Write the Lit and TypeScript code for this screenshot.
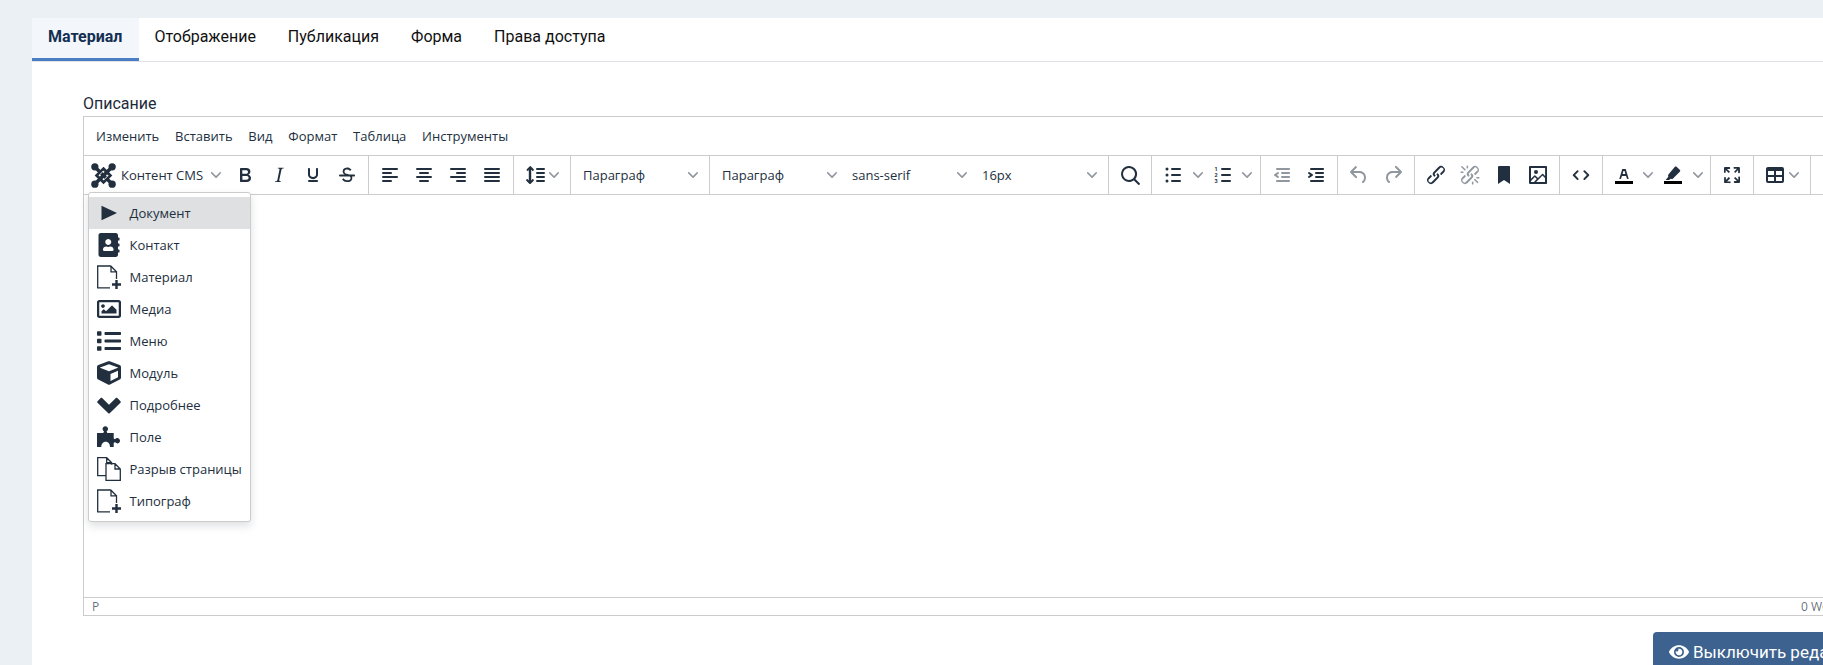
import { LitElement, html, css, svg } from "lit";
import { customElement } from "lit/decorators.js";

const bar = (x: number, y: number, w: number, h = 2) =>
  svg`<rect x=${x} y=${y} width=${w} height=${h} rx="1"></rect>`;
const dot = (x: number, y: number, r = 1.5) => svg`<circle cx=${x} cy=${y} r=${r}></circle>`;
const p = (d: string) => svg`<path d=${d}></path>`;

const icons: Record<string, unknown> = {
  bold: p("M7.8 19c-.3 0-.5 0-.6-.2l-.2-.5V5.7c0-.2 0-.4.2-.5l.6-.2h5c1.5 0 2.7.3 3.5 1 .7.6 1.1 1.4 1.1 2.5a3 3 0 0 1-.6 1.9c-.4.6-1 1-1.6 1.2.4.1.9.3 1.3.6s.8.7 1 1.2c.4.4.5 1 .5 1.6 0 1.3-.4 2.3-1.3 3-.8.7-2.1 1-3.8 1H7.8zm5-8.3c.6 0 1.2-.1 1.6-.5.4-.3.6-.7.6-1.3 0-1.1-.8-1.7-2.3-1.7H9.3v3.5h3.4zm.5 6c.7 0 1.3-.1 1.7-.4.4-.4.6-.9.6-1.5s-.2-1-.7-1.4c-.4-.3-1-.4-2-.4H9.4v3.8h4z"),
  italic: p("M16.7 4.7l-.1.9h-.3c-.6 0-1 0-1.4.3-.3.3-.4.6-.5 1.1l-2.1 9.8v.6c0 .5.4.8 1.4.8h.2l-.2.8H8l.2-.8h.2c1.1 0 1.8-.5 2-1.5l2-9.8.1-.5c0-.6-.4-.8-1.4-.8h-.3l.2-.9h5.8z"),
  underline: p("M16 5c.6 0 1 .4 1 1v5.5a4 4 0 0 1-.4 1.8l-1 1.4a5.3 5.3 0 0 1-5.5 1 5 5 0 0 1-1.6-1c-.5-.4-.8-.9-1.1-1.4a4 4 0 0 1-.4-1.8V6c0-.6.4-1 1-1s1 .4 1 1v5.5c0 .3 0 .6.2 1l.6.7a3.3 3.3 0 0 0 2.2.8 3.4 3.4 0 0 0 2.2-.8c.3-.2.4-.5.6-.8l.2-.9V6c0-.6.4-1 1-1zM8 17h8c.6 0 1 .4 1 1s-.4 1-1 1H8a1 1 0 0 1 0-2z"),
  strike: p("M15.6 8.5c-.5-.7-1-1.1-1.3-1.3-.6-.4-1.3-.6-2-.6-2.7 0-2.8 1.7-2.8 2.1 0 1.6 1.8 2 3.2 2.3 4.4.9 4.6 2.8 4.6 3.9 0 1.4-.7 4.1-5 4.1A6.2 6.2 0 0 1 7 16.4l1.5-1.1c.4.6 1.6 2 3.7 2 1.6 0 2.5-.4 3-1 .3-.4.4-.8.4-1.3 0-1.6-1.6-2.4-3.4-2.8-1-.2-2.2-.5-3-1-.7-.5-1.5-1.2-1.5-2.7 0-1.4.6-2.5 1.8-3.2.8-.5 1.8-.8 2.8-.8 1.6 0 2.7.7 3.5 1.4l.7.8-1.4 1.1zM5 11.5h14c.6 0 1 .4 1 1s-.4 1-1 1H5a1 1 0 0 1 0-2z"),
  alignLeft: [bar(4, 5, 16), bar(4, 9, 10), bar(4, 13, 16), bar(4, 17, 10)],
  alignCenter: [bar(4, 5, 16), bar(7, 9, 10), bar(4, 13, 16), bar(7, 17, 10)],
  alignRight: [bar(4, 5, 16), bar(10, 9, 10), bar(4, 13, 16), bar(10, 17, 10)],
  justify: [bar(4, 5, 16), bar(4, 9, 16), bar(4, 13, 16), bar(4, 17, 16)],
  lineHeight: [
    bar(13, 5, 9), bar(13, 9, 9), bar(13, 13, 9), bar(13, 17, 9),
    p("M7.7 3.3l3 3a1 1 0 0 1-1.4 1.4L8.2 6.6v10.8l1.1-1.1a1 1 0 0 1 1.4 1.4l-3 3a1 1 0 0 1-1.4 0l-3-3a1 1 0 0 1 1.4-1.4l1.1 1.1V6.6L5.2 7.7a1 1 0 0 1-1.4-1.4l3-3a.7.7 0 0 1 .9 0z"),
  ],
  search: p("M16 17.3a8 8 0 1 1 1.4-1.4l4.3 4.4a1 1 0 0 1-1.4 1.4l-4.4-4.3zm-5-.3a6 6 0 1 0 0-12 6 6 0 0 0 0 12z"),
  bullist: [dot(6, 6), dot(6, 12), dot(6, 18), bar(10, 5, 10), bar(10, 11, 10), bar(10, 17, 10)],
  numlist: [
    svg`<text class="num" x="3.6" y="8.2">1</text><text class="num" x="3.6" y="14.2">2</text><text class="num" x="3.6" y="20.2">3</text>`,
    bar(10, 5, 10), bar(10, 11, 10), bar(10, 17, 10),
  ],
  outdent: p("M7 5h12c.6 0 1 .4 1 1s-.4 1-1 1H7a1 1 0 1 1 0-2zm5 4h7c.6 0 1 .4 1 1s-.4 1-1 1h-7a1 1 0 0 1 0-2zm0 4h7c.6 0 1 .4 1 1s-.4 1-1 1h-7a1 1 0 0 1 0-2zm-5 4h12a1 1 0 0 1 0 2H7a1 1 0 0 1 0-2zm1.6-3.8a1 1 0 0 1-1.2 1.6l-3-2a1 1 0 0 1 0-1.6l3-2a1 1 0 0 1 1.2 1.6L6.8 12l1.8 1.2z"),
  indent: p("M7 5h12c.6 0 1 .4 1 1s-.4 1-1 1H7a1 1 0 1 1 0-2zm5 4h7c.6 0 1 .4 1 1s-.4 1-1 1h-7a1 1 0 0 1 0-2zm0 4h7c.6 0 1 .4 1 1s-.4 1-1 1h-7a1 1 0 0 1 0-2zm-5 4h12a1 1 0 0 1 0 2H7a1 1 0 0 1 0-2zm-2.6-3.8L6.2 12l-1.8-1.2a1 1 0 0 1 1.2-1.6l3 2a1 1 0 0 1 0 1.6l-3 2a1 1 0 1 1-1.2-1.6z"),
  undo: p("M6.4 8H12c3.7 0 6.2 2 6.8 5.1.6 2.7-.4 5.6-2.3 6.8a1 1 0 0 1-1-1.8c1.1-.6 1.8-2.7 1.4-4.6-.5-2.1-2.1-3.5-4.9-3.5H6.4l3.3 3.3a1 1 0 1 1-1.4 1.4l-5-5a1 1 0 0 1 0-1.4l5-5a1 1 0 0 1 1.4 1.4L6.4 8z"),
  redo: p("M17.6 10H12c-2.8 0-4.4 1.4-4.9 3.5-.4 2 .3 4 1.4 4.6a1 1 0 1 1-1 1.8c-2-1.2-2.9-4.1-2.3-6.8.6-3 3-5.1 6.8-5.1h5.6l-3.3-3.3a1 1 0 1 1 1.4-1.4l5 5a1 1 0 0 1 0 1.4l-5 5a1 1 0 0 1-1.4-1.4l3.3-3.3z"),
  link: p("M6.2 12.3a1 1 0 0 1 1.4 1.4l-2 2a2 2 0 1 0 2.6 2.8l4.8-4.8a1 1 0 0 0 0-1.4 1 1 0 1 1 1.4-1.3 2.9 2.9 0 0 1 0 4L9.6 20a3.9 3.9 0 0 1-5.5-5.5l2-2zm11.6-.6a1 1 0 0 1-1.4-1.4l2-2a2 2 0 1 0-2.6-2.8L11 10.3a1 1 0 0 0 0 1.4A1 1 0 1 1 9.6 13a2.9 2.9 0 0 1 0-4L14.4 4a3.9 3.9 0 0 1 5.5 5.5l-2 2z"),
  unlink: p("M6.2 12.3a1 1 0 0 1 1.4 1.4l-2.1 2a2 2 0 1 0 2.7 2.8l4.8-4.8a1 1 0 0 0 0-1.4 1 1 0 1 1 1.4-1.3 2.9 2.9 0 0 1 0 4L9.6 20a3.9 3.9 0 0 1-5.5-5.5l2-2zm11.6-.6a1 1 0 0 1-1.4-1.4l2.1-2a2 2 0 1 0-2.7-2.8L11 10.3a1 1 0 0 0 0 1.4A1 1 0 1 1 9.6 13a2.9 2.9 0 0 1 0-4L14.4 4a3.9 3.9 0 0 1 5.5 5.5l-2 2zM7.6 6.3a.8.8 0 0 1-1 1.1L3.3 4.2a.7.7 0 1 1 1-1l3.2 3.1zM5.1 8.6a.8.8 0 0 1 0 1.5H3a.8.8 0 0 1 0-1.5H5zm5-3.5a.8.8 0 0 1-1.5 0V3a.8.8 0 0 1 1.5 0v2zm6 11.8a.8.8 0 0 1 1-1l3.2 3.2a.8.8 0 0 1-1 1L16 17zm-2.2 2a.8.8 0 0 1 1.5 0V21a.8.8 0 0 1-1.5 0V19zm5-3.5a.7.7 0 1 1 0-1.5H21a.8.8 0 0 1 0 1.5h-2z"),
  bookmark: p("M6 4v17l6-4 6 4V4c0-.6-.4-1-1-1H7a1 1 0 0 0-1 1z"),
  image: svg`<path fill-rule="evenodd" d="M5 15.7l3.3-3.2c.3-.3.7-.3 1 0L12 15l4.1-4c.3-.4.8-.4 1 0l2 1.9V5H5v10.7zM5 18V19h3l2.8-2.9-2-2L5 17.9zm14-3l-2.5-2.4-6.4 6.5H19v-4zM4 3h16c.6 0 1 .4 1 1v16c0 .6-.4 1-1 1H4a1 1 0 0 1-1-1V4c0-.6.4-1 1-1zm6 8a2 2 0 1 0 0-4 2 2 0 0 0 0 4z"></path>`,
  code: p("M9.4 8.8a1 1 0 0 0-1.4-1.4l-4 4a1 1 0 0 0 0 1.4l4 4a1 1 0 0 0 1.4-1.4L6.1 12l3.3-3.2zm5.2 0a1 1 0 0 1 1.4-1.4l4 4a1 1 0 0 1 0 1.4l-4 4a1 1 0 0 1-1.4-1.4l3.3-3.4-3.3-3.2z"),
  textColor: [
    svg`<rect x="3" y="18" width="18" height="3" fill="#000"></rect>`,
    p("M8.7 16h-.8a.5.5 0 0 1-.5-.6l2.7-9c.1-.3.3-.4.5-.4h2.8c.2 0 .4.1.5.4l2.7 9a.5.5 0 0 1-.5.6h-.8a.5.5 0 0 1-.4-.4l-.7-2.2c0-.3-.3-.4-.5-.4h-3.4c-.2 0-.4.1-.5.4l-.7 2.2c0 .3-.2.4-.4.4zm2.6-7.6l-.6 2a.5.5 0 0 0 .5.6h1.6a.5.5 0 0 0 .5-.6l-.6-2c0-.3-.3-.4-.5-.4h-.4c-.2 0-.4.1-.5.4z"),
  ],
  highlight: [
    svg`<rect x="3" y="18" width="18" height="3" fill="#000"></rect>`,
    p("M15.3 3.6l3.7 3.4c.4.4.4 1 0 1.4l-7.2 7.4c-.3.3-.6.4-1 .3l-1.2-.3-1.4 1.2H4.6l2.7-3.3-.2-1.3c0-.4.1-.7.3-1l6.5-7.7c.4-.4 1-.4 1.4-.1z"),
  ],
  fullscreen: p("M15.3 10l-1.2-1.3 2.9-3h-2.3a.9.9 0 1 1 0-1.7H19c.5 0 .9.4.9.9v4.4a.9.9 0 1 1-1.8 0V7l-2.9 3zm0 4l3 3v-2.3a.9.9 0 1 1 1.7 0V19c0 .5-.4.9-.9.9h-4.4a.9.9 0 1 1 0-1.8H17l-3-2.9 1.3-1.2zM10 15.4l-2.9 3h2.3a.9.9 0 1 1 0 1.7H5a.9.9 0 0 1-.9-.9v-4.4a.9.9 0 1 1 1.8 0V17l2.9-3 1.2 1.3zM8.7 10L5.7 7v2.3a.9.9 0 0 1-1.7 0V5c0-.5.4-.9.9-.9h4.4a.9.9 0 0 1 0 1.8H7l3 2.9-1.3 1.2z"),
  table: svg`<path fill-rule="evenodd" d="M19 4a2 2 0 0 1 2 2v12a2 2 0 0 1-2 2H5a2 2 0 0 1-2-2V6c0-1.1.9-2 2-2h14zM5 14v4h6v-4H5zm14 0h-6v4h6v-4zm0-6h-6v4h6V8zM5 12h6V8H5v4z"></path>`,
};

type Tool =
  | { kind: "btn"; icon: string; off?: boolean }
  | { kind: "split"; icon: string; tight?: boolean }
  | { kind: "select"; label: string };

const btn = (icon: string, off = false): Tool => ({ kind: "btn", icon, off });
const split = (icon: string, tight = false): Tool => ({ kind: "split", icon, tight });
const select = (label: string): Tool => ({ kind: "select", label });

const groups: Tool[][] = [
  [btn("bold"), btn("italic"), btn("underline"), btn("strike")],
  [btn("alignLeft"), btn("alignCenter"), btn("alignRight"), btn("justify")],
  [split("lineHeight", true)],
  [select("Параграф")],
  [select("Параграф"), select("sans-serif"), select("16px")],
  [btn("search")],
  [split("bullist"), split("numlist")],
  [btn("outdent", true), btn("indent")],
  [btn("undo", true), btn("redo", true)],
  [btn("link"), btn("unlink", true), btn("bookmark"), btn("image")],
  [btn("code")],
  [split("textColor"), split("highlight")],
  [btn("fullscreen")],
  [split("table", true)],
  [],
];

const menu = [
  { label: "Документ", view: "0 0 24 24", d: "M4.500 4.800L20 12 4.500 19.200z" },
  {
    label: "Контакт",
    view: "-32 0 512 512",
    d: "M436 160c6.6 0 12-5.4 12-12v-40c0-6.6-5.4-12-12-12h-20V48c0-26.5-21.5-48-48-48H48C21.5 0 0 21.5 0 48v416c0 26.5 21.5 48 48 48h320c26.5 0 48-21.5 48-48v-48h20c6.6 0 12-5.4 12-12v-40c0-6.6-5.4-12-12-12h-20v-64h20c6.6 0 12-5.4 12-12v-40c0-6.6-5.4-12-12-12h-20v-64h20zm-228-32c35.3 0 64 28.7 64 64s-28.7 64-64 64-64-28.7-64-64 28.7-64 64-64zm112 236.8c0 10.6-10 19.2-22.4 19.2H118.4C106 384 96 375.4 96 364.8v-19.2c0-31.8 30.1-57.6 67.2-57.6h5c12.3 5.1 25.7 8 39.8 8s27.6-2.9 39.8-8h5c37.1 0 67.2 25.8 67.2 57.6v19.2z",
  },
  { label: "Материал", view: "0 0 24 24", d: "file" },
  {
    label: "Медиа",
    view: "0 0 512 512",
    d: "M464 64H48C21.49 64 0 85.49 0 112v288c0 26.51 21.49 48 48 48h416c26.51 0 48-21.49 48-48V112c0-26.51-21.49-48-48-48zm-6 336H54a6 6 0 0 1-6-6V118a6 6 0 0 1 6-6h404a6 6 0 0 1 6 6v276a6 6 0 0 1-6 6zM128 152c-22.091 0-40 17.909-40 40s17.909 40 40 40 40-17.909 40-40-17.909-40-40-40zM96 352h320v-80l-87.515-87.515c-4.686-4.686-12.284-4.686-16.971 0L192 304l-39.515-39.515c-4.686-4.686-12.284-4.686-16.971 0L96 304v48z",
  },
  {
    label: "Меню",
    view: "0 0 512 512",
    d: "M80 368H16a16 16 0 0 0-16 16v64a16 16 0 0 0 16 16h64a16 16 0 0 0 16-16v-64a16 16 0 0 0-16-16zm0-320H16A16 16 0 0 0 0 64v64a16 16 0 0 0 16 16h64a16 16 0 0 0 16-16V64a16 16 0 0 0-16-16zm0 160H16a16 16 0 0 0-16 16v64a16 16 0 0 0 16 16h64a16 16 0 0 0 16-16v-64a16 16 0 0 0-16-16zm416 176H176a16 16 0 0 0-16 16v32a16 16 0 0 0 16 16h320a16 16 0 0 0 16-16v-32a16 16 0 0 0-16-16zm0-320H176a16 16 0 0 0-16 16v32a16 16 0 0 0 16 16h320a16 16 0 0 0 16-16V80a16 16 0 0 0-16-16zm0 160H176a16 16 0 0 0-16 16v32a16 16 0 0 0 16 16h320a16 16 0 0 0 16-16v-32a16 16 0 0 0-16-16z",
  },
  {
    label: "Модуль",
    view: "0 0 512 512",
    d: "M239.1 6.3l-208 78c-18.7 7-31.1 25-31.1 45v225.1c0 18.2 10.3 34.8 26.5 42.9l208 104c13.5 6.8 29.4 6.8 42.9 0l208-104c16.3-8.1 26.5-24.8 26.5-42.9V129.3c0-20-12.4-37.9-31.1-44.9l-208-78C262 2.2 250 2.2 239.1 6.3zM256 68.4l192 72v1.1l-192 78-192-78v-1.1l192-72zm32 356V275.5l160-65v133.9l-160 80z",
  },
  {
    label: "Подробнее",
    view: "0 0 24 24",
    d: "M.5 8.300L3.700 5.100c.4-.4 1-.4 1.400 0L12 11.800l6.900-6.700c.4-.4 1-.4 1.400 0l3.200 3.200c.4.4.4 1 0 1.400L12.700 20.200c-.4.4-1 .4-1.400 0L.5 9.700c-.4-.4-.4-1 0-1.400z",
  },
  {
    label: "Поле",
    view: "0 0 24 24",
    d: "M0 8h6.300l.7-1.600a2.700 2.700 0 1 1 2.600 0l.7 1.600h6.400v5.500l1.300.8a2.700 2.700 0 1 1 0 2.800l-1.300.8V22h-3.700c0-3-1.700-5.200-4.300-5.200S4.300 19 4.300 22H0z",
  },
  { label: "Разрыв страницы", view: "0 0 24 24", d: "copy" },
  { label: "Типограф", view: "0 0 24 24", d: "file" },
];

@customElement("app-root")
export class AppRoot extends LitElement {
  static styles = css`
    :host {
      display: block;
      width: 1823px;
      height: 665px;
      overflow: hidden;
      background: #ebf0f5;
      font-family: Roboto, sans-serif;
      font-size: 16px;
      color: #1c2a3a;
    }
    .card {
      margin: 18px 0 0 32px;
      width: 1900px;
      height: 647px;
      background: #fff;
    }
    .tabs {
      display: flex;
      height: 44px;
      box-sizing: border-box;
      border-bottom: 1px solid #dfe3e7;
    }
    .tab {
      height: 43px;
      box-sizing: border-box;
      padding: 0 16px;
      line-height: 38px;
      font-size: 16px;
      color: #111;
    }
    .tab.active {
      background: #f3f6fa;
      border-bottom: 3px solid #4a7dc4;
      padding-right: 17px;
      margin-right: -1px;
      font-weight: 700;
      color: #132f53;
    }
    .body {
      position: relative;
      padding: 30px 0 0 51px;
    }
    .label {
      height: 24px;
      line-height: 24px;
      color: #1c2a3a;
    }
    .editor {
      width: 1778px;
      border: 1px solid #ccc;
      color: #222f3e;
      font-family: "Open Sans", sans-serif;
    }
    .menubar {
      display: flex;
      height: 38px;
      align-items: center;
      padding-left: 12px;
      gap: 15.800px;
      font-size: 13px;
      border-bottom: 1px solid #ccc;
    }
    .toolbar {
      display: flex;
      height: 38px;
      border-bottom: 1px solid #ccc;
    }
    .group {
      display: flex;
      align-items: center;
      padding: 0 4px;
      border-right: 1px solid #ccc;
    }
    .group:last-child {
      border-right: 0;
    }
    .btn {
      flex: none;
      width: 34px;
      height: 34px;
      display: flex;
      align-items: center;
      justify-content: center;
    }
    svg.icon {
      width: 24px;
      height: 24px;
      fill: #222f3e;
      display: block;
    }
    .off svg.icon {
      fill: rgba(34, 47, 62, 0.5);
    }
    .num {
      font: 700 5.500px Roboto, sans-serif;
    }
    .split {
      flex: none;
      display: flex;
      align-items: center;
      width: 49.800px;
    }
    .split.tight {
      width: 48px;
    }
    .split.tight svg.chev {
      margin-left: -3px;
    }
    svg.chev {
      flex: none;
      width: 10px;
      height: 10px;
      margin-left: 2.500px;
      fill: rgba(34, 47, 62, 0.5);
    }
    .select {
      flex: none;
      width: 130px;
      height: 34px;
      box-sizing: border-box;
      padding: 0 7px 0 8px;
      display: flex;
      align-items: center;
      justify-content: space-between;
      font-size: 13px;
    }
    .cms {
      flex: none;
      width: 140px;
      height: 34px;
      display: flex;
      align-items: center;
      padding-left: 3px;
      box-sizing: border-box;
      font-size: 13px;
    }
    .cms svg.logo {
      width: 25px;
      height: 25px;
      margin-right: 5px;
      flex: none;
    }
    .cms svg.chev {
      margin-left: 8px;
    }
    .canvas {
      height: 402px;
    }
    .status {
      display: flex;
      justify-content: space-between;
      height: 17px;
      align-items: center;
      padding: 0 8px;
      font-size: 12px;
      color: rgba(34, 47, 62, 0.7);
      border-top: 1px solid #ccc;
    }
    .actions {
      padding: 16px 0 0 1570px;
    }
    .toggle {
      display: inline-flex;
      align-items: center;
      gap: 4px;
      height: 40px;
      box-sizing: border-box;
      padding: 0 16px;
      white-space: nowrap;
      background: #3d628f;
      color: #fff;
      border-radius: 4px 4px 0 0;
      font-size: 17px;
    }
    .toggle svg {
      width: 20px;
      height: 18px;
      fill: #fff;
    }
    .panel {
      position: absolute;
      left: 56px;
      top: 130px;
      width: 163px;
      box-sizing: border-box;
      padding: 4px 0;
      background: #fff;
      border: 1px solid #ccc;
      border-radius: 3px;
      box-shadow: 0 4px 8px 0 rgba(34, 47, 62, 0.15);
      font-family: "Open Sans", sans-serif;
      font-size: 13px;
      color: #222f3e;
    }
    .item {
      height: 32px;
      display: flex;
      align-items: center;
      padding-left: 8px;
      gap: 8.500px;
      white-space: nowrap;
    }
    .item.active {
      background: #dee0e2;
    }
    .item svg {
      flex: none;
      width: 24px;
      height: 24px;
      fill: #222f3e;
    }
    .line {
      fill: none;
      stroke: #222f3e;
      stroke-width: 1.300px;
    }
  `;

  private tool(t: Tool) {
    if (t.kind === "btn") {
      return html`<div class="btn ${t.off ? "off" : ""}">${this.icon(t.icon)}</div>`;
    }
    if (t.kind === "split") {
      return html`<div class="split ${t.tight ? "tight" : ""}"><div class="btn">${this.icon(t.icon)}</div>${this.chev()}</div>`;
    }
    return html`<div class="select"><span>${t.label}</span>${this.chev()}</div>`;
  }

  private icon(name: string) {
    return html`<svg class="icon" viewBox="0 0 24 24">${icons[name]}</svg>`;
  }

  private chev() {
    return html`<svg class="chev" viewBox="0 0 10 10"><path d="M8.700 2.200c.3-.3.8-.3 1 0 .4.4.4.9 0 1.200L5.700 7.800c-.3.3-.9.3-1.200 0L.2 3.400a.8.8 0 0 1 0-1.200c.3-.3.8-.3 1.100 0L5 6l3.700-3.800z"></path></svg>`;
  }

  private logo() {
    return html`<svg class="logo" viewBox="0 0 24 24" fill="none" stroke="#222f3e">
      <path stroke-width="3.400" d="M4 4l16 16M20 4L4 20"></path>
      <path stroke-width="2.800" d="M12 5.500L18.500 12 12 18.500 5.500 12z"></path>
      <path stroke="#fff" stroke-width=".8" d="M7.500 12l4.500-4.500M16.500 12L12 16.500"></path>
      <g fill="#222f3e" stroke="none">
        <circle cx="3.700" cy="3.700" r="3.500"></circle><circle cx="20.300" cy="3.700" r="3.500"></circle>
        <circle cx="3.700" cy="20.300" r="3.500"></circle><circle cx="20.300" cy="20.300" r="3.500"></circle>
      </g>
    </svg>`;
  }

  private itemIcon(m: { view: string; d: string }) {
    if (m.d === "file") {
      return html`<svg viewBox="0 0 24 24">
        <path class="line" d="M13 22.800H.7V1h13l5.800 5.800V14M14 1v5.800h5.500"></path>
        <path d="M18.300 15h2.400v3.300H24v2.400h-3.300V24h-2.400v-3.300H15v-2.400h3.300z"></path>
      </svg>`;
    }
    if (m.d === "copy") {
      return html`<svg viewBox="0 0 24 24">
        <path class="line" d="M9 18.700H.7V.7h9l5 5v2M9.700 .7v5h5M9 6.700h9l5.300 5.300v11.300H9zM18 6.700v5.300h5.300"></path>
      </svg>`;
    }
    return html`<svg viewBox=${m.view}><path d=${m.d}></path></svg>`;
  }

  render() {
    return html`
      <div class="card">
        <div class="tabs">
          <div class="tab active">Материал</div>
          <div class="tab">Отображение</div>
          <div class="tab">Публикация</div>
          <div class="tab">Форма</div>
          <div class="tab">Права доступа</div>
        </div>
        <div class="body">
          <div class="label">Описание</div>
          <div class="editor">
            <div class="menubar">
              <span>Изменить</span><span>Вставить</span><span>Вид</span><span>Формат</span><span>Таблица</span><span>Инструменты</span>
            </div>
            <div class="toolbar">
              ${groups.map(
                (g, i) => html`<div class="group">
                  ${i === 0
                    ? html`<div class="cms">${this.logo()}<span>Контент CMS</span>${this.chev()}</div>`
                    : ""}
                  ${g.map((t) => this.tool(t))}
                </div>`
              )}
            </div>
            <div class="canvas"></div>
            <div class="status"><span>P</span><span>0 WORDS</span></div>
          </div>
          <div class="actions">
            <div class="toggle">
              <svg viewBox="0 0 576 512"><path d="M572.52 241.4C518.29 135.59 410.93 64 288 64S57.68 135.64 3.48 241.41a32.35 32.35 0 0 0 0 29.19C57.71 376.41 165.07 448 288 448s230.32-71.64 284.52-177.41a32.35 32.35 0 0 0 0-29.19zM288 400a144 144 0 1 1 144-144 143.93 143.93 0 0 1-144 144zm0-240a95.31 95.31 0 0 0-25.31 3.79 47.85 47.85 0 0 1-66.9 66.9A95.78 95.78 0 1 0 288 160z"></path></svg>
              Выключить редактор
            </div>
          </div>
          <div class="panel">
            ${menu.map(
              (m, i) => html`<div class="item ${i === 0 ? "active" : ""}">${this.itemIcon(m)}<span>${m.label}</span></div>`
            )}
          </div>
        </div>
      </div>
    `;
  }
}
